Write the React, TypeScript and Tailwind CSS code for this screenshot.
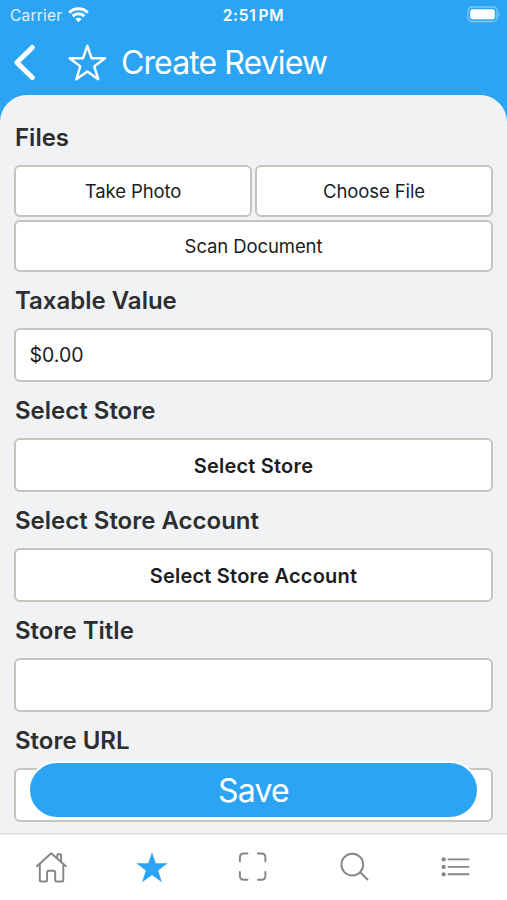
import type { ReactNode } from "react"
import clsx from "clsx"

type FieldProps = {
    label: string
    children?: ReactNode
}

const box = "flex items-center rounded-[6px] border-2 border-[#c3c6bd] bg-white pt-[2px] text-[#1c1c1e]"

const Field = ({ label, children }: FieldProps) => {
    return (
        <div className="flex flex-col">
            <div className="flex h-[56px] items-center pt-[2px] pl-[1px] text-[24px] font-semibold text-[#2d2e30]">
                <span className="whitespace-nowrap">{ label }</span>
            </div>
            { children }
        </div>
    )
}

const StatusBar = () => {
    return (
        <div className="grid h-[30px] grid-cols-3 items-center px-[10px] text-[15.5px] text-white">
            <div className="flex items-center gap-[6px]">
                <span className="pt-[1px] tracking-[0.2px] text-white/85">Carrier</span>
                <svg className="h-[16px] w-[21px]" viewBox="0 0 21 16" fill="none" stroke="currentColor" strokeWidth="2.9">
                    <path d="M1.2 5.6a13.2 13.2 0 0 1 18.6 0" />
                    <path d="M4.7 9.1a8.2 8.2 0 0 1 11.6 0" />
                    <path d="M10.5 15.2 7.4 12.1a4.4 4.4 0 0 1 6.2 0Z" fill="currentColor" stroke="none" />
                </svg>
            </div>
            <div className="pt-[1px] text-center font-semibold tracking-[0.7px] [word-spacing:-2.5px]">2:51 PM</div>
            <div className="flex items-center justify-end">
                <svg className="-mr-[4px] mb-[1px] h-[17px] w-[34px]" viewBox="0 0 34 17" fill="none">
                    <rect x="1" y="1" width="29" height="14.5" rx="4" stroke="#fff" strokeOpacity="0.4" strokeWidth="1.3" />
                    <rect x="3.2" y="3.2" width="24.6" height="10.1" rx="2.2" fill="#fff" />
                    <path d="M31.6 6v4.8c1.5-.8 1.5-4 0-4.8Z" fill="#fff" fillOpacity="0.5" />
                </svg>
            </div>
        </div>
    )
}

const Header = () => {
    return (
        <div className="flex h-[65px] items-center pl-[12px] text-white">
            <svg className="h-[40px] w-[26px]" viewBox="0 0 26 40" fill="none" stroke="currentColor" strokeWidth="5" strokeLinecap="round" strokeLinejoin="round">
                <path d="M20.3 4.5 4.9 19.5 20.3 34.5" />
            </svg>
            <svg className="ml-[29px] h-[40px] w-[40px]" viewBox="0 0 40 40" fill="none" stroke="currentColor" strokeWidth="2.4" strokeLinejoin="round">
                <path d="M20.3 2.8 24.6 15.3H38L27.3 23.4 31.2 36.2 20.3 28.5 9.4 36.2 13.3 23.4 2.6 15.3H16Z" />
            </svg>
            <div className="ml-[14px] pt-[1px] text-[32px] font-normal tracking-[-0.9px]">Create Review</div>
        </div>
    )
}

const tabs = [
    {
        name: "home",
        icon: (
            <g strokeWidth="1.9" strokeLinejoin="round" strokeLinecap="round">
                <path d="M3.9 17.2 18.2 4.3 32.9 17.2" />
                <path d="M6.8 15v16.2q0 1.3 1.3 1.3h4.7q1.3 0 1.3-1.3v-7.9q0-1.6 1.6-1.6h4.9q1.6 0 1.6 1.6v7.9q0 1.3 1.3 1.3H29q1.3 0 1.3-1.3V15" />
                <path d="M24.3 9.4V5.8q0-.6.6-.6h2.6q.6 0 .6.6v7" />
            </g>
        ),
    },
    {
        name: "reviews",
        icon: <path d="M18 3.2 21.8 14.3H33.6L24.2 21.4 27.9 33.2 18 26.1 8.1 33.2 11.8 21.4 2.4 14.3H14.2Z" fill="currentColor" stroke="none" />,
    },
    {
        name: "scan",
        icon: (
            <g strokeWidth="1.9" strokeLinecap="round">
                <path d="M4.9 12.3V8.5q0-4 4-4h3.6" />
                <path d="M22.8 4.5h3.6q4 0 4 4v3.8" />
                <path d="M30.4 23v3.8q0 4-4 4h-3.6" />
                <path d="M12.5 30.8H8.9q-4 0-4-4V23" />
            </g>
        ),
    },
    {
        name: "search",
        icon: (
            <g strokeWidth="1.9" strokeLinecap="round">
                <circle cx="15.3" cy="15.6" r="10.9" />
                <path d="M23.1 23.3 30.5 30.5" />
            </g>
        ),
    },
    {
        name: "menu",
        icon: (
            <g strokeWidth="1.9" strokeLinecap="round">
                <path d="M10.5 10.4h20M10.5 17.9h20M10.5 25.3h20" />
                <g fill="currentColor" stroke="none">
                    <circle cx="5.7" cy="10.4" r="2.1" />
                    <circle cx="5.7" cy="17.9" r="2.1" />
                    <circle cx="5.7" cy="25.3" r="2.1" />
                </g>
            </g>
        ),
    },
]

const TabBar = () => {
    return (
        <div className="grid h-[67px] grid-cols-5 border-t-2 border-[#e7e8ea] bg-white">
            {
                tabs.map(t => (
                    <div key={t.name} className={clsx("flex justify-center pt-[14px]", t.name === "reviews" ? "text-[#2ba5f3]" : "text-[#858585]")}>
                        <svg className="h-[36px] w-[36px]" viewBox="0 0 36 36" fill="none" stroke="currentColor">{ t.icon }</svg>
                    </div>
                ))
            }
        </div>
    )
}

const App = () => {
    return (
        <div className="flex h-[900px] w-[507px] flex-col overflow-hidden bg-[#2ba5f3] font-['Inter',sans-serif]">
            <StatusBar />
            <Header />
            <div className="relative flex-1 overflow-hidden rounded-t-[27px] bg-[#f1f2f4] px-[14px] pt-[14px]">
                <Field label="Files">
                    <div className="grid grid-cols-2 gap-[3px] text-[18.5px] tracking-[-0.1px]">
                        <div className={clsx(box, "h-[52px] justify-center")}>Take Photo</div>
                        <div className={clsx(box, "h-[52px] justify-center")}>Choose File</div>
                        <div className={clsx(box, "col-span-2 h-[52px] justify-center")}>Scan Document</div>
                    </div>
                </Field>
                <Field label="Taxable Value">
                    <div className={clsx(box, "h-[54px] px-[13.5px] text-[19.5px]")}>$0.00</div>
                </Field>
                <Field label="Select Store">
                    <div className={clsx(box, "h-[54px] justify-center text-[20px] font-semibold tracking-[0.2px]")}>Select Store</div>
                </Field>
                <Field label="Select Store Account">
                    <div className={clsx(box, "h-[54px] justify-center text-[20px] font-semibold tracking-[0.2px]")}>Select Store Account</div>
                </Field>
                <Field label="Store Title">
                    <div className={clsx(box, "h-[54px]")} />
                </Field>
                <Field label="Store URL">
                    <div className={clsx(box, "h-[54px]")} />
                </Field>
                <div className="absolute right-[28px] bottom-[14px] left-[28px] flex h-[58px] items-center justify-center rounded-full border-2 border-white bg-[#2ba5f3] pt-[1px] text-[32px] font-normal tracking-[-0.8px] text-white">
                    Save
                </div>
            </div>
            <TabBar />
        </div>
    )
}

export default App
